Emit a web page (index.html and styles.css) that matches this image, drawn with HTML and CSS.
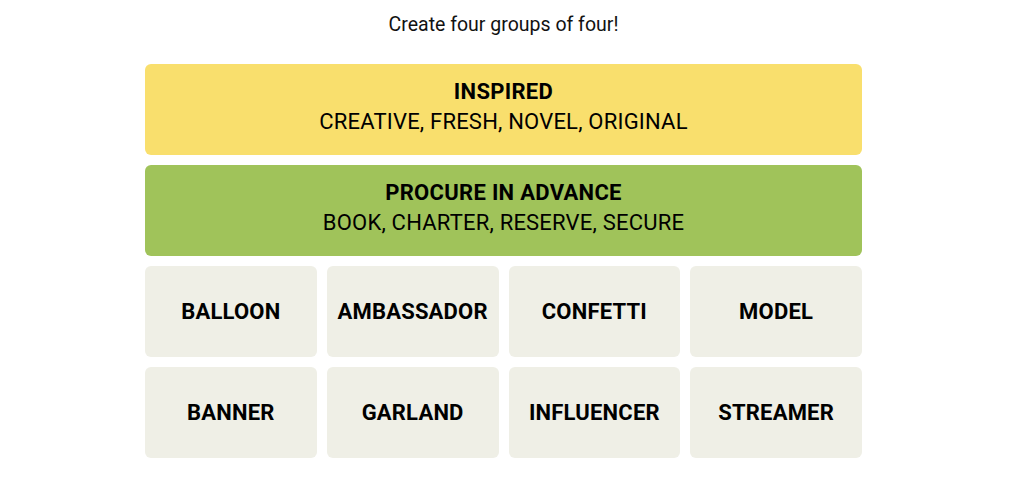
FILE: index.html
```html
<!DOCTYPE html>
<html>
<head>
<meta charset="utf-8">
<link rel="stylesheet" href="styles.css">
</head>
<body>
<div class="page">
  <p class="title">Create four groups of four!</p>
  <div class="board">
    <div class="group yellow">
      <div class="group-name">INSPIRED</div>
      <div class="group-words">CREATIVE, FRESH, NOVEL, ORIGINAL</div>
    </div>
    <div class="group green">
      <div class="group-name">PROCURE IN ADVANCE</div>
      <div class="group-words">BOOK, CHARTER, RESERVE, SECURE</div>
    </div>
    <div class="tiles">
      <div class="tile">BALLOON</div>
      <div class="tile">AMBASSADOR</div>
      <div class="tile">CONFETTI</div>
      <div class="tile">MODEL</div>
      <div class="tile">BANNER</div>
      <div class="tile">GARLAND</div>
      <div class="tile">INFLUENCER</div>
      <div class="tile">STREAMER</div>
    </div>
  </div>
</div>
</body>
</html>
```
FILE: styles.css
```css
html, body {
  margin: 0;
  padding: 0;
  background: #ffffff;
}
.page {
  width: 1007px;
  font-family: Roboto, "Liberation Sans", sans-serif;
  color: #000;
}
.title {
  margin: 0;
  padding-top: 13px;
  height: 64px;
  box-sizing: border-box;
  text-align: center;
  font-size: 19.5px;
  line-height: 24px;
  color: #121212;
}
.board {
  width: 717px;
  margin: 0 auto;
  display: flex;
  flex-direction: column;
  gap: 10px;
}
.group {
  height: 91px;
  box-sizing: border-box;
  padding-bottom: 6px;
  border-radius: 6px;
  display: flex;
  flex-direction: column;
  align-items: center;
  justify-content: center;
  text-align: center;
}
.yellow { background: #f9df6d; }
.green { background: #a0c35a; }
.group-name {
  font-weight: 700;
  font-size: 22px;
  line-height: 30px;
  letter-spacing: 0.3px;
}
.group-words {
  font-size: 22px;
  line-height: 30px;
  letter-spacing: 0.2px;
}
.tiles {
  display: grid;
  grid-template-columns: repeat(4, 1fr);
  grid-auto-rows: 91px;
  gap: 10px;
}
.tile {
  background: #efefe6;
  border-radius: 6px;
  display: flex;
  align-items: center;
  justify-content: center;
  padding-bottom: 1px;
  font-weight: 700;
  font-size: 22px;
  letter-spacing: 0.2px;
}
```
